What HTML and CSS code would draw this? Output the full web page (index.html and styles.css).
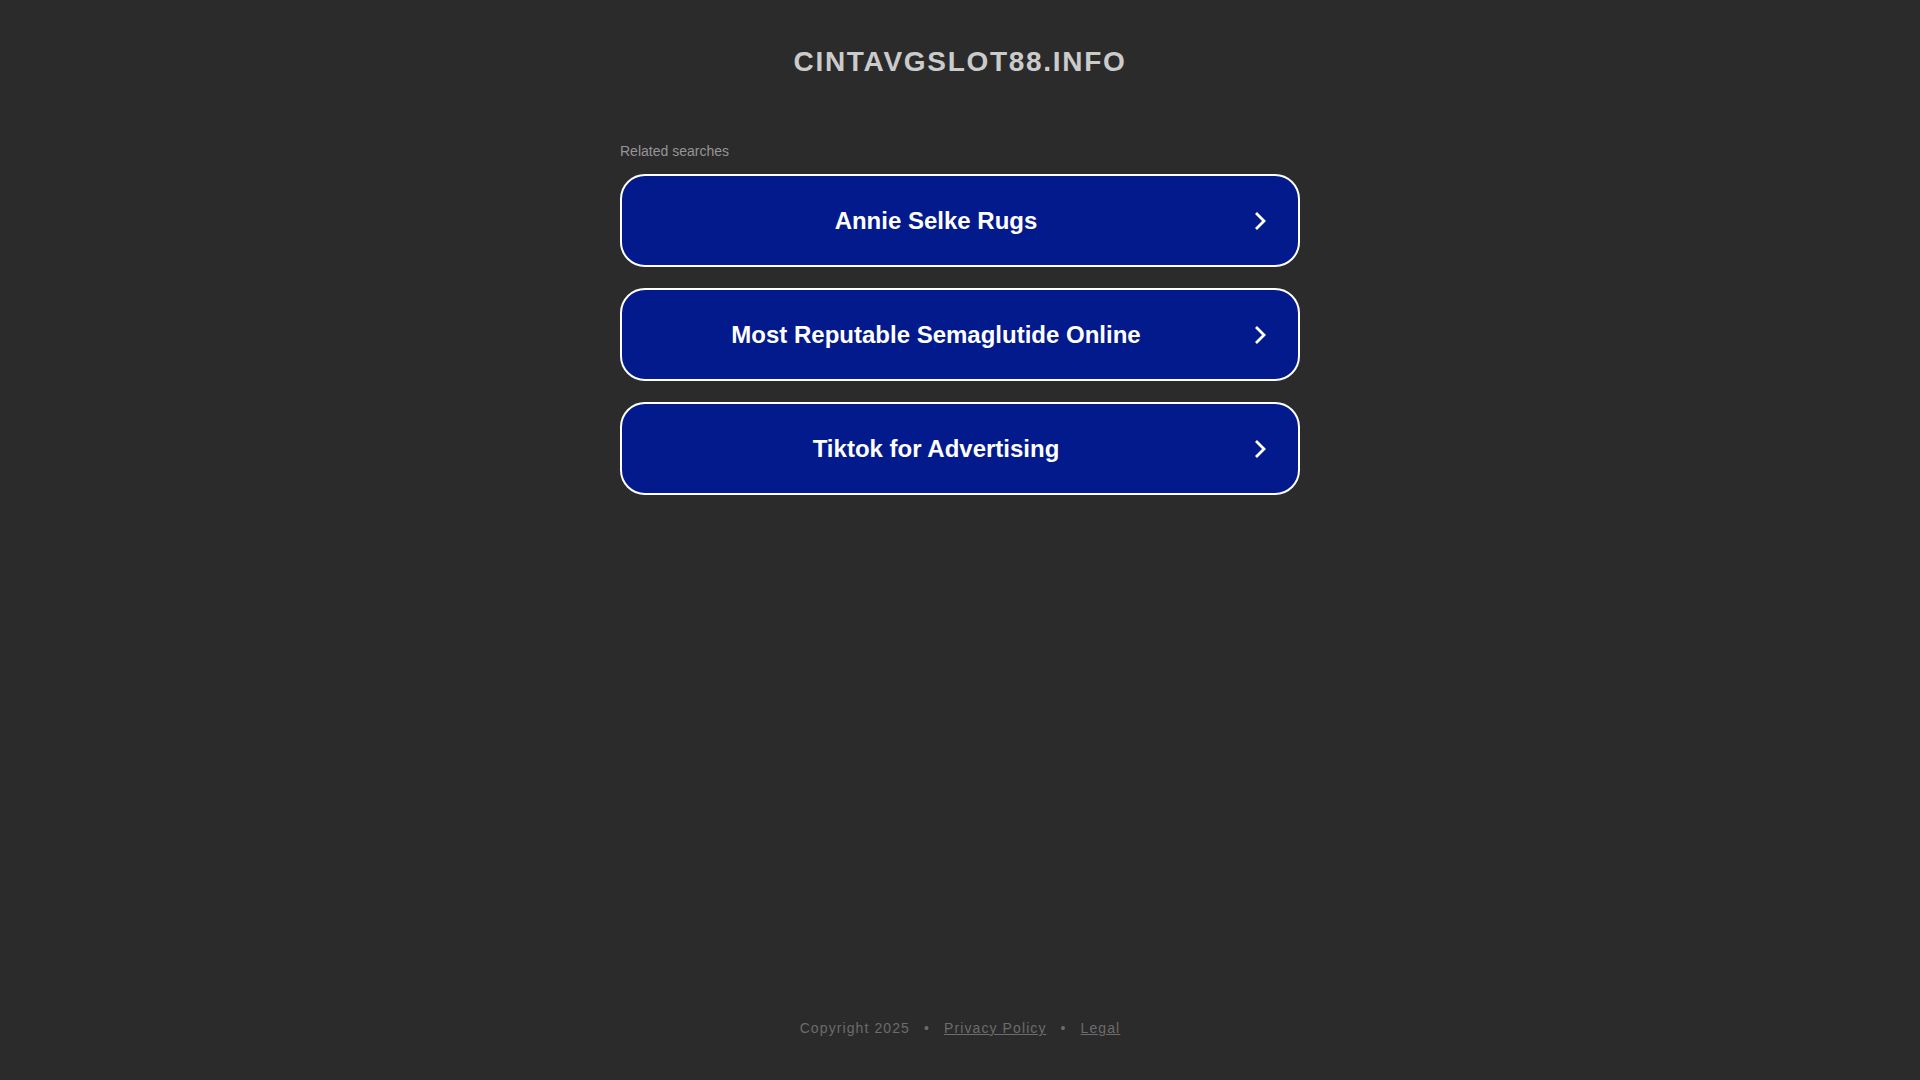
FILE: index.html
```html
<!DOCTYPE html>
<html lang="en">
<head>
<meta charset="utf-8">
<title>cintavgslot88.info</title>
<link rel="stylesheet" href="styles.css">
</head>
<body>
<div class="page">
  <header class="header">
    <h1 class="domain">cintavgslot88.info</h1>
  </header>
  <main class="main">
    <div class="container">
      <div class="label">Related searches</div>
      <div class="list">
        <a class="search" href="#">
          <span class="search-text">Annie Selke Rugs</span>
          <svg class="chev" width="12" height="20" viewBox="0 0 12 20"><path d="M2 2 L10 10 L2 18" fill="none" stroke="#fff" stroke-width="2.8"/></svg>
        </a>
        <a class="search" href="#">
          <span class="search-text">Most Reputable Semaglutide Online</span>
          <svg class="chev" width="12" height="20" viewBox="0 0 12 20"><path d="M2 2 L10 10 L2 18" fill="none" stroke="#fff" stroke-width="2.8"/></svg>
        </a>
        <a class="search" href="#">
          <span class="search-text">Tiktok for Advertising</span>
          <svg class="chev" width="12" height="20" viewBox="0 0 12 20"><path d="M2 2 L10 10 L2 18" fill="none" stroke="#fff" stroke-width="2.8"/></svg>
        </a>
      </div>
    </div>
  </main>
  <footer class="footer">
    <span>Copyright 2025</span><span class="sep">•</span><a class="flink" href="#">Privacy Policy</a><span class="sep">•</span><a class="flink" href="#">Legal</a>
  </footer>
</div>
</body>
</html>
```

FILE: styles.css
```css
html, body {
  margin: 0;
  padding: 0;
  background: #2b2b2b;
}

body {
  font-family: "Liberation Sans", Arial, Helvetica, sans-serif;
}

.page {
  display: flex;
  flex-direction: column;
  min-height: 100vh;
}

.header {
  padding-top: 46px;
  text-align: center;
}

.domain {
  margin: 0;
  font-size: 28px;
  line-height: 32px;
  font-weight: bold;
  text-transform: uppercase;
  letter-spacing: 1.7px;
  color: #cbcbcb;
}

.main {
  flex: 1;
}

.container {
  width: 680px;
  margin: 65px auto 0;
}

.label {
  font-size: 14px;
  line-height: 16px;
  color: #959595;
  margin-bottom: 15px;
}

.list {
  display: flex;
  flex-direction: column;
  gap: 21px;
}

.search {
  display: flex;
  align-items: center;
  height: 89px;
  border: 2px solid #ffffff;
  border-radius: 25px;
  background: #021a8c;
  color: #ffffff;
  text-decoration: none;
}

.search-text {
  flex: 1;
  text-align: center;
  font-size: 24px;
  font-weight: bold;
}

.chev {
  display: block;
  margin: 0 32px 0 4px;
}

.footer {
  text-align: center;
  font-size: 14px;
  line-height: 16px;
  letter-spacing: 1.1px;
  color: #6c6c6c;
  padding-bottom: 44px;
}

.sep {
  margin: 0 14px;
}

.flink {
  color: #6c6c6c;
  text-decoration: underline;
}
```
